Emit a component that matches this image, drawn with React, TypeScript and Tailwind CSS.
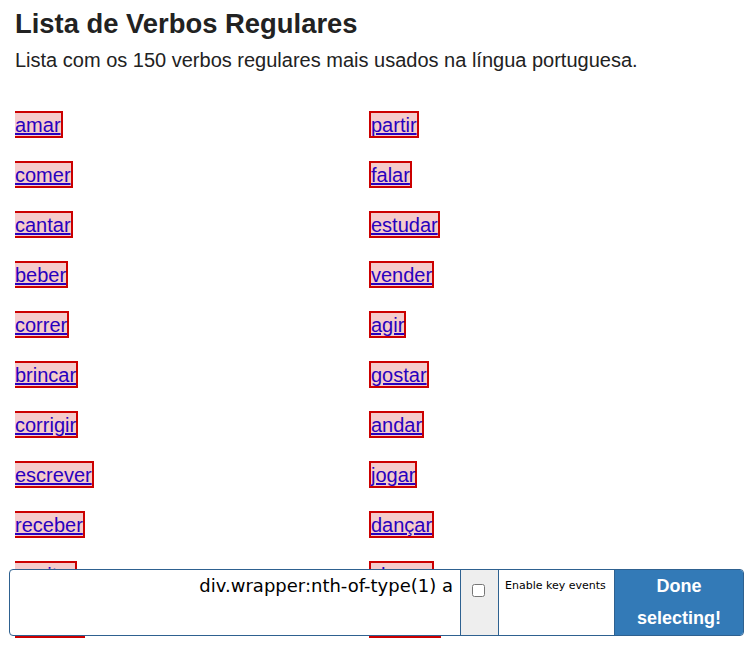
const left = ["amar", "comer", "cantar", "beber", "correr", "brincar", "corrigir", "escrever", "receber", "aceitar", "esperar"];
const right = ["partir", "falar", "estudar", "vender", "agir", "gostar", "andar", "jogar", "dançar", "chegar", "lembrar"];

function Verb({ word, first }: { word: string; first?: boolean }) {
  return (
    <a
      href="#"
      className={
        "inline-block h-[27px] border-2 border-[#cc0000] bg-[#f5cccc] pt-[1px] text-[20px] leading-[22px] text-[#2900be] underline " +
        (first ? "border-l-0" : "")
      }
    >
      {word}
    </a>
  );
}

export default function App() {
  return (
    <div className="relative h-[660px] w-[744px] overflow-hidden bg-white font-['Liberation_Sans',Arial,sans-serif] text-[#222]">
      <div className="px-[15px]">
        <h1 className="mt-[8px] text-[27.4px] font-bold leading-[32px]">Lista de Verbos Regulares</h1>
        <p className="mt-[8px] text-[20px] leading-[24px]">
          Lista com os 150 verbos regulares mais usados na língua portuguesa.
        </p>
        <div className="mt-[39px] grid grid-cols-[354px_1fr]">
          <div className="flex flex-col">
            {left.map((w) => (
              <div key={w} className="h-[50px]">
                <Verb word={w} first />
              </div>
            ))}
          </div>
          <div className="flex flex-col">
            {right.map((w) => (
              <div key={w} className="h-[50px]">
                <Verb word={w} />
              </div>
            ))}
          </div>
        </div>
      </div>

      {/* selector toolbar */}
      <div className="absolute left-[9px] right-0 top-[569px] flex h-[67px] overflow-hidden rounded-[4px] border border-[#2e6190] bg-white font-['DejaVu_Sans',Verdana,sans-serif]">
        <div className="flex-1 pr-[7px] pt-[5px] text-right text-[18px] leading-[22px] text-black">
          div.wrapper:nth-of-type(1) a
        </div>
        <div className="w-[38px] border-l border-[#2e6190] bg-[#eeeeee] pl-[11px] pt-[10px]">
          <input type="checkbox" className="m-0 h-[13px] w-[13px]" />
        </div>
        <div className="w-[117px] border-x border-[#2e6190] pl-[6px] pt-[9px] text-[11px] leading-[14px] text-black">
          Enable key events
        </div>
        <button
          type="button"
          className="w-[128px] bg-[#337ab7] pb-[2px] text-center font-['Liberation_Sans',Arial,sans-serif] text-[18px] font-bold leading-[32px] text-white"
        >
          Done
          <br />
          selecting!
        </button>
      </div>
    </div>
  );
}
